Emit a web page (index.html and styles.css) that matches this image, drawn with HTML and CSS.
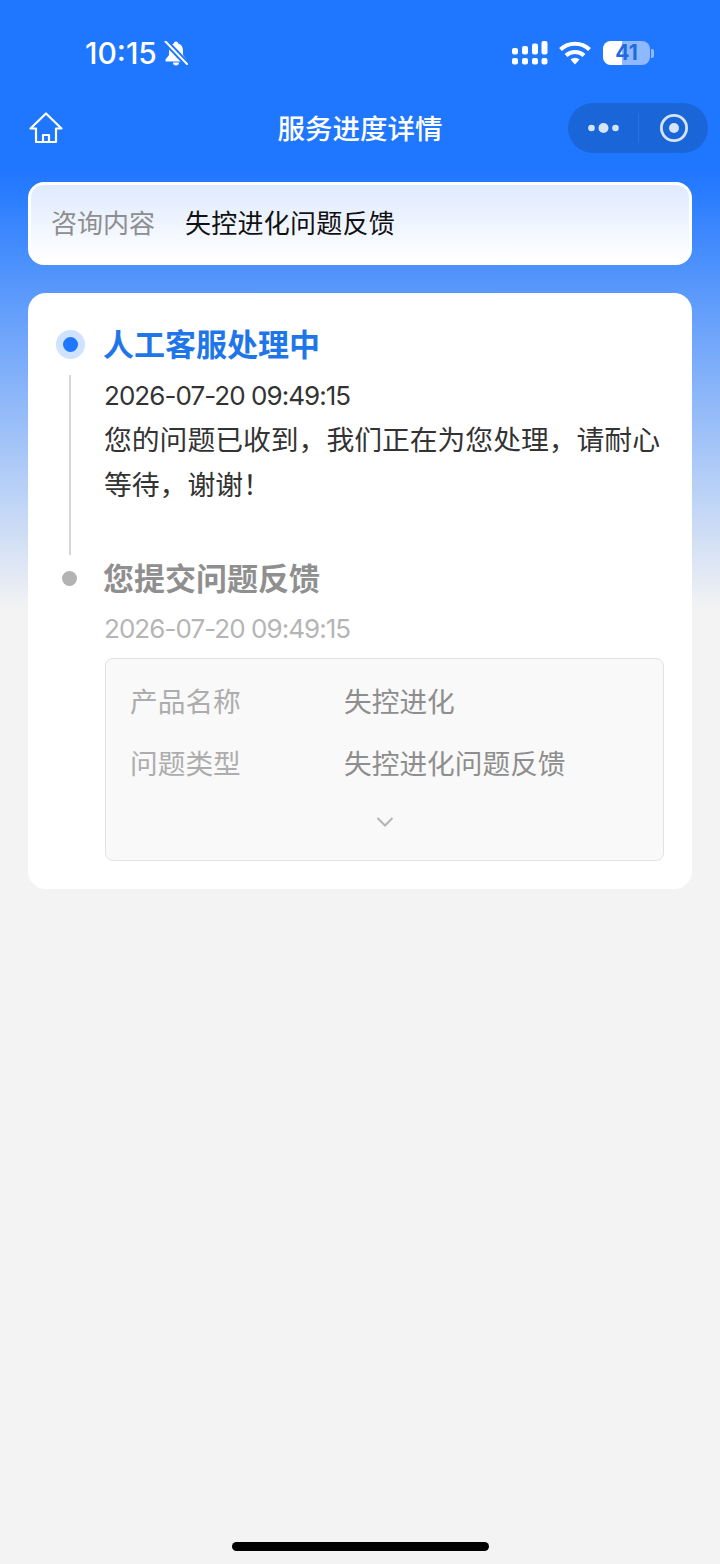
FILE: index.html
```html
<!DOCTYPE html>
<html lang="zh-CN">
<head>
<meta charset="utf-8">
<title>服务进度详情</title>
<link rel="stylesheet" href="styles.css">
</head>
<body>
<div class="page">
  <div class="status">
    <div class="status-left">
      <span class="time">10:15</span>
      <svg class="bell" viewBox="0 0 24 25" width="24" height="25">
        <path fill="#fff" d="M12 .5c-1.200 0-2 .8-2.200 1.900C6.600 3.200 5 6 5 9.500v4.500L1.500 18.500v2h21v-2L19 14V9.500C19 6 17.400 3.200 14.200 2.400 14 1.300 13.200.5 12 .5z"/>
        <path fill="#fff" d="M9 21.500h6a3 3 0 0 1-6 0z"/>
        <path stroke="#1F76FF" stroke-width="6" d="M1 0l23 24"/>
        <path stroke="#fff" stroke-width="2" stroke-linecap="round" d="M1.500 .5 23 23"/>
      </svg>
    </div>
    <div class="status-right">
      <svg class="signal" viewBox="0 0 36 24" width="36" height="24">
        <g fill="#fff">
          <rect x="0" y="7" width="6" height="6.500" rx="2"/><rect x="10" y="5" width="6" height="8.500" rx="2"/><rect x="20" y="2.500" width="6" height="11" rx="2"/><rect x="29.500" y="0" width="6" height="13.500" rx="2"/>
          <rect x="0" y="17" width="6" height="6.500" rx="2"/><rect x="10" y="17" width="6" height="6.500" rx="2"/><rect x="20" y="17" width="6" height="6.500" rx="2"/><rect x="29.500" y="17" width="6" height="6.500" rx="2"/>
        </g>
      </svg>
      <svg class="wifi" viewBox="0 0 32 24" width="32" height="24">
        <g fill="none" stroke="#fff" stroke-width="4">
          <path d="M1.500 8.500a21 21 0 0 1 29 0"/>
          <path d="M7 14.500a13 13 0 0 1 18 0"/>
        </g>
        <path fill="#fff" d="M11.500 18.500a7 7 0 0 1 9 0L16 23.500z"/>
      </svg>
      <div class="battery">
        <div class="battery-body"><div class="battery-fill"></div><span class="battery-num">41</span></div>
        <div class="battery-cap"></div>
      </div>
    </div>
  </div>

  <div class="nav">
    <svg class="home" viewBox="0 0 34 32" width="34" height="32">
      <path fill="none" stroke="#fff" stroke-width="2.200" stroke-linejoin="round" d="M17 1.500 1.500 16.500H7v13.500h20V16.500h5.500zM14 30v-7h6v7"/>
    </svg>
    <div class="nav-title">服务进度详情</div>
    <div class="capsule">
      <div class="capsule-part">
        <svg viewBox="0 0 32 12" width="32" height="12"><g fill="#d6e4fb"><circle cx="3.500" cy="6" r="3.300"/><circle cx="15.500" cy="6" r="5"/><circle cx="27.500" cy="6" r="3.300"/></g></svg>
      </div>
      <div class="capsule-line"></div>
      <div class="capsule-part">
        <svg viewBox="0 0 30 30" width="30" height="30"><circle cx="15" cy="15" r="12.600" fill="none" stroke="#d6e4fb" stroke-width="2.800"/><circle cx="15" cy="15" r="5" fill="#d6e4fb"/></svg>
      </div>
    </div>
  </div>

  <main class="content">
    <section class="topic">
      <span class="topic-label">咨询内容</span>
      <span class="topic-value">失控进化问题反馈</span>
    </section>

    <section class="card">
      <div class="step step-active">
        <div class="rail">
          <span class="dot dot-active"></span>
          <span class="rail-line"></span>
        </div>
        <div class="step-body">
          <h2 class="step-title title-active">人工客服处理中</h2>
          <div class="step-time">2026-07-20 09:49:15</div>
          <p class="step-text">您的问题已收到，我们正在为您处理，请耐心等待，谢谢！</p>
        </div>
      </div>
      <div class="step">
        <div class="rail">
          <span class="dot dot-done"></span>
        </div>
        <div class="step-body">
          <h2 class="step-title title-done">您提交问题反馈</h2>
          <div class="step-time time-done">2026-07-20 09:49:15</div>
          <div class="detail">
            <div class="detail-row"><span class="detail-key">产品名称</span><span class="detail-val">失控进化</span></div>
            <div class="detail-row"><span class="detail-key">问题类型</span><span class="detail-val">失控进化问题反馈</span></div>
            <div class="detail-more">
              <svg viewBox="0 0 18 12" width="18" height="12"><path fill="none" stroke="#b4b4b4" stroke-width="2" d="M1.500 2 9 9.500 16.500 2"/></svg>
            </div>
          </div>
        </div>
      </div>
    </section>
  </main>

  <div class="home-indicator"></div>
</div>
</body>
</html>
```
FILE: styles.css
```css
* { box-sizing: border-box; }
html, body { margin: 0; padding: 0; }
body {
  font-family: "Inter", "Noto Sans CJK SC", sans-serif;
  background: #f3f3f3;
}
.page {
  width: 720px;
  height: 1564px;
  display: flex;
  flex-direction: column;
  background: linear-gradient(180deg, #1f76ff 0, #1f76ff 170px, #f3f3f3 610px);
}
.status {
  height: 88px;
  padding: 18px 66px 0 85px;
  display: flex;
  justify-content: space-between;
  align-items: center;
  color: #fff;
}
.status-left { display: flex; align-items: center; gap: 7px; }
.time { font-size: 30px; font-weight: 500; line-height: 36px; }
.status-right { display: flex; align-items: center; gap: 11px; }
.wifi { margin-right: 1px; }
.battery { display: flex; align-items: center; gap: 1px; }
.battery-body {
  position: relative;
  width: 47px;
  height: 24px;
  border-radius: 8px;
  overflow: hidden;
  background: #8fb9ff;
  display: flex;
  align-items: center;
  justify-content: center;
}
.battery-fill { position: absolute; left: 0; top: 0; bottom: 0; width: 19px; background: #fff; }
.battery-num { position: relative; font-size: 21px; font-weight: 700; color: #1f6ae0; line-height: 24px; }
.battery-cap { width: 3px; height: 9px; border-radius: 0 2px 2px 0; background: #8fb9ff; }

.nav {
  position: relative;
  height: 82px;
  padding: 0 12px 0 29px;
  display: flex;
  align-items: center;
  justify-content: space-between;
}
.home { margin-top: -2px; }
.nav-title {
  position: absolute;
  left: 0;
  right: 0;
  text-align: center;
  font-size: 27.500px;
  font-weight: 500;
  line-height: 40px;
  color: #fff;
}
.capsule {
  width: 140px;
  height: 50px;
  margin-top: -2px;
  border-radius: 25px;
  background: #1a66d9;
  display: flex;
  align-items: center;
}
.capsule-part { flex: 1; display: flex; align-items: center; justify-content: center; padding-left: 2px; }
.capsule-line { width: 1px; height: 30px; background: #2a72de; }

.content {
  flex: 1;
  padding: 12px 28px 0;
  display: flex;
  flex-direction: column;
  gap: 28px;
}
.topic {
  height: 83px;
  border: 3px solid #fff;
  border-radius: 16px;
  background: linear-gradient(180deg, #dfeafe 0, #ffffff 100%);
  padding: 0 20px;
  display: flex;
  align-items: center;
  gap: 30px;
  font-size: 26px;
  line-height: 36px;
}
.topic-label { color: #8e8e8e; }
.topic-value { color: #111; letter-spacing: 0.25px; }

.card {
  height: 596px;
  background: #fff;
  border-radius: 18px;
  padding: 30px 28px 27px;
}
.step { display: flex; }
.step-active { height: 234px; }
.rail {
  width: 48px;
  flex: none;
  display: flex;
  flex-direction: column;
}
.dot { display: block; border-radius: 50%; }
.dot-active {
  width: 29px;
  height: 29px;
  margin-top: 7px;
  background: #1f76ff;
  border: 7px solid #cfe2ff;
}
.rail-line {
  display: block;
  width: 2px;
  height: 180px;
  margin: 16px 0 0 13px;
  background: #d6d6d6;
}
.dot-done {
  width: 15px;
  height: 15px;
  margin: 14px 0 0 6px;
  background: #b3b3b3;
}
.step-body { flex: 1; min-width: 0; }
.step-title {
  margin: 0;
  font-size: 31px;
  font-weight: 700;
  line-height: 44px;
  margin-left: -1px;
}
.title-active { color: #1f76e8; }
.title-done { color: #8f8f8f; }
.step-time {
  margin-top: 11px;
  font-size: 26px;
  line-height: 36px;
  letter-spacing: -0.95px;
  color: #333;
}
.time-done { color: #b5b5b5; margin-top: 10px; }
.step-text {
  margin: 4px 0 0;
  font-size: 27.800px;
  line-height: 45px;
  color: #333;
}
.detail {
  width: 559px;
  height: 203px;
  margin: 11px 0 0 1px;
  padding: 10px 24px 0;
  border: 1.500px solid #e2e2e2;
  border-radius: 8px;
  background: #f9f9f9;
  font-size: 27.700px;
}
.detail-row { display: flex; height: 62px; align-items: center; }
.detail-key { width: 214px; flex: none; color: #adadad; }
.detail-val { color: #8e8e8e; }
.detail-more { display: flex; justify-content: center; padding-top: 23px; }

.home-indicator {
  align-self: center;
  flex: none;
  width: 257px;
  height: 9px;
  margin-bottom: 13px;
  border-radius: 5px;
  background: #000;
}
```
